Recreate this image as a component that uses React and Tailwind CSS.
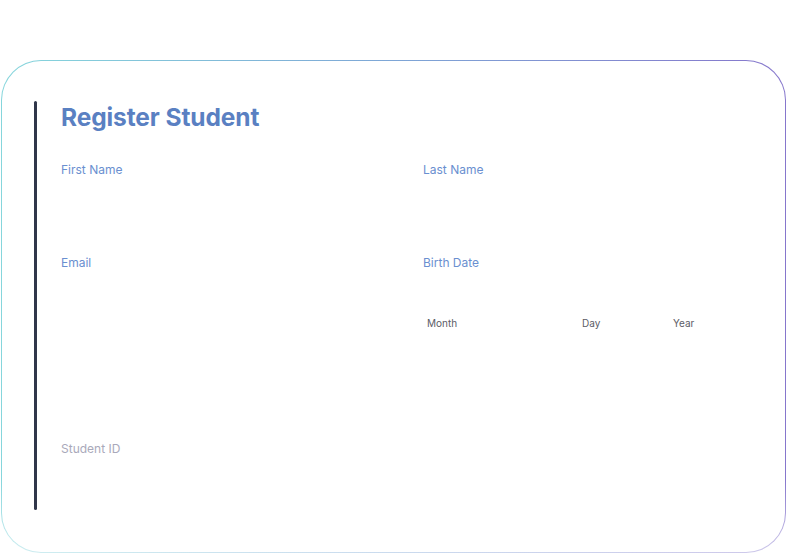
import { useState } from 'react';

function Field({ label, muted, value, onChange }) {
  return (
    <div className="flex flex-col">
      <label className={muted ? "block text-[12px] leading-[18px] text-[#a9a9ba]" : "block text-[12px] leading-[18px] text-[#6a8fd0]"}>
        {label}
      </label>
      <input
        value={value}
        onChange={onChange}
        className="mt-2 h-8 w-[300px] bg-transparent text-sm text-gray-700 outline-none"
      />
    </div>
  );
}

export default function App() {
  const [form, setForm] = useState({ first: '', last: '', email: '', id: '' });
  const set = (k) => (e) => setForm({ ...form, [k]: e.target.value });

  return (
    <div className="h-[554px] w-[787px] bg-white pt-[60px] pl-px font-['Inter',sans-serif]">
      {/* Gradient border card */}
      <div className="h-[493px] w-[785px] rounded-[40px] p-px bg-[image:linear-gradient(to_bottom,transparent_85%,rgba(255,255,255,0.6)),linear-gradient(to_right,#86d6dc,#7ea6d6_50%,#8676cc)]">
        <div className="flex h-full w-full rounded-[39px] bg-white pl-[32px] pt-[40px] pb-[42px]">
          {/* Accent bar */}
          <div className="w-[3px] rounded-sm bg-[#30364a]" />

          <div className="flex-1 pl-[24px]">
            <h1 className="text-[24.5px] font-bold leading-8 tracking-[-0.1px] text-[#5a80c2]">
              Register Student
            </h1>

            <div className="mt-[28px] grid grid-cols-[362px_1fr]">
              <div className="h-[93px]">
                <Field label="First Name" value={form.first} onChange={set('first')} />
              </div>
              <div className="h-[93px]">
                <Field label="Last Name" value={form.last} onChange={set('last')} />
              </div>

              <div className="h-[186px]">
                <Field label="Email" value={form.email} onChange={set('email')} />
              </div>
              <div className="h-[186px]">
                <label className="block text-[12px] leading-[18px] text-[#6a8fd0]">Birth Date</label>
                <div className="mt-[44px] flex text-[10px] leading-[14px] text-[#5c5c66]">
                  <span className="w-[159px] pl-[4px]">Month</span>
                  <span className="w-[91px]">Day</span>
                  <span>Year</span>
                </div>
              </div>

              <div>
                <Field label="Student ID" muted value={form.id} onChange={set('id')} />
              </div>
            </div>
          </div>
        </div>
      </div>
    </div>
  );
}
